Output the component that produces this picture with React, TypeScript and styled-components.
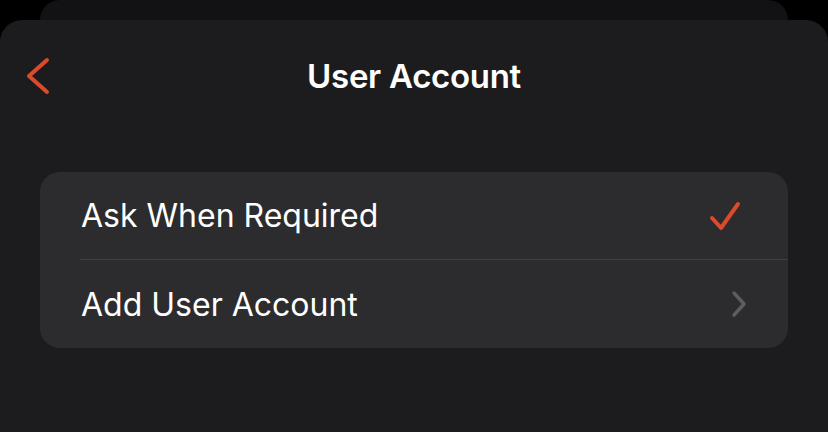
import styled, { createGlobalStyle } from "styled-components";

const GlobalStyle = createGlobalStyle`
    html, body {
        margin: 0;
        padding: 0;
        background-color: #000000;
    }
    * {
        box-sizing: border-box;
    }
`

const Stage = styled.div`
    width: 828px;
    height: 432px;
    overflow: hidden;
    display: flex;
    flex-direction: column;
    font-family: Inter, "Noto Sans", sans-serif;
    -webkit-font-smoothing: antialiased;
`

const BackSheet = styled.div`
    height: 20px;
    margin: 0 40px;
    flex-shrink: 0;
    background-color: #121214;
    border-radius: 22px 22px 0 0;
`

const Sheet = styled.div`
    flex: 1;
    display: flex;
    flex-direction: column;
    background-color: #1c1c1e;
    border-radius: 22px 22px 0 0;
`

const NavBar = styled.div`
    height: 112px;
    display: grid;
    grid-template-columns: 1fr auto 1fr;
    align-items: center;
    padding: 0 25px;
`

const BackButton = styled.button`
    justify-self: start;
    background: none;
    border: none;
    padding: 0;
    display: flex;
    cursor: pointer;
`

const Title = styled.h1`
    margin: 0;
    font-size: 33px;
    font-weight: 600;
    color: #ffffff;
    letter-spacing: -0.3px;
`

const Group = styled.div`
    margin: 40px 40px 0;
    background-color: #2c2c2e;
    border-radius: 20px;
    overflow: hidden;
`

const Row = styled.div`
    display: flex;
    padding-left: 40px;
    cursor: pointer;
`

const RowInner = styled.div<{ $last?: boolean; $padRight: number }>`
    flex: 1;
    height: 88px;
    display: flex;
    align-items: center;
    justify-content: space-between;
    padding: 0 ${(p) => p.$padRight}px 0 1px;
    border-bottom: ${(p) => (p.$last ? "none" : "1px solid #414145")};
`

const Label = styled.span`
    font-size: 32px;
    font-weight: 400;
    color: #ffffff;
    letter-spacing: 0;
`

const accent = "#dc4a2b";

const BackChevron = () => (
    <svg width="28" height="40" viewBox="0 0 28 40">
        <polyline
            points="22,4 4,20 22,36"
            fill="none"
            stroke={accent}
            strokeWidth="4"
            strokeLinecap="round"
            strokeLinejoin="round"
        />
    </svg>
);

const Checkmark = () => (
    <svg width="32" height="32" viewBox="0 0 32 32">
        <polyline
            points="3,18 12,28 29,4"
            fill="none"
            stroke={accent}
            strokeWidth="4"
            strokeLinecap="round"
            strokeLinejoin="round"
        />
    </svg>
);

const Disclosure = () => (
    <svg width="18" height="28" viewBox="0 0 18 28">
        <polyline
            points="4,3 14,14 4,25"
            fill="none"
            stroke="#5d5d61"
            strokeWidth="3.5"
            strokeLinecap="round"
            strokeLinejoin="round"
        />
    </svg>
);

const App = () => {
    return (
        <>
            <GlobalStyle />
            <Stage>
                <BackSheet />
                <Sheet>
                    <NavBar>
                        <BackButton aria-label="Back">
                            <BackChevron />
                        </BackButton>
                        <Title>User Account</Title>
                        <div></div>
                    </NavBar>
                    <Group>
                        <Row>
                            <RowInner $padRight={47}>
                                <Label>Ask When Required</Label>
                                <Checkmark />
                            </RowInner>
                        </Row>
                        <Row>
                            <RowInner $last $padRight={40}>
                                <Label>Add User Account</Label>
                                <Disclosure />
                            </RowInner>
                        </Row>
                    </Group>
                </Sheet>
            </Stage>
        </>
    );
};

export default App;
